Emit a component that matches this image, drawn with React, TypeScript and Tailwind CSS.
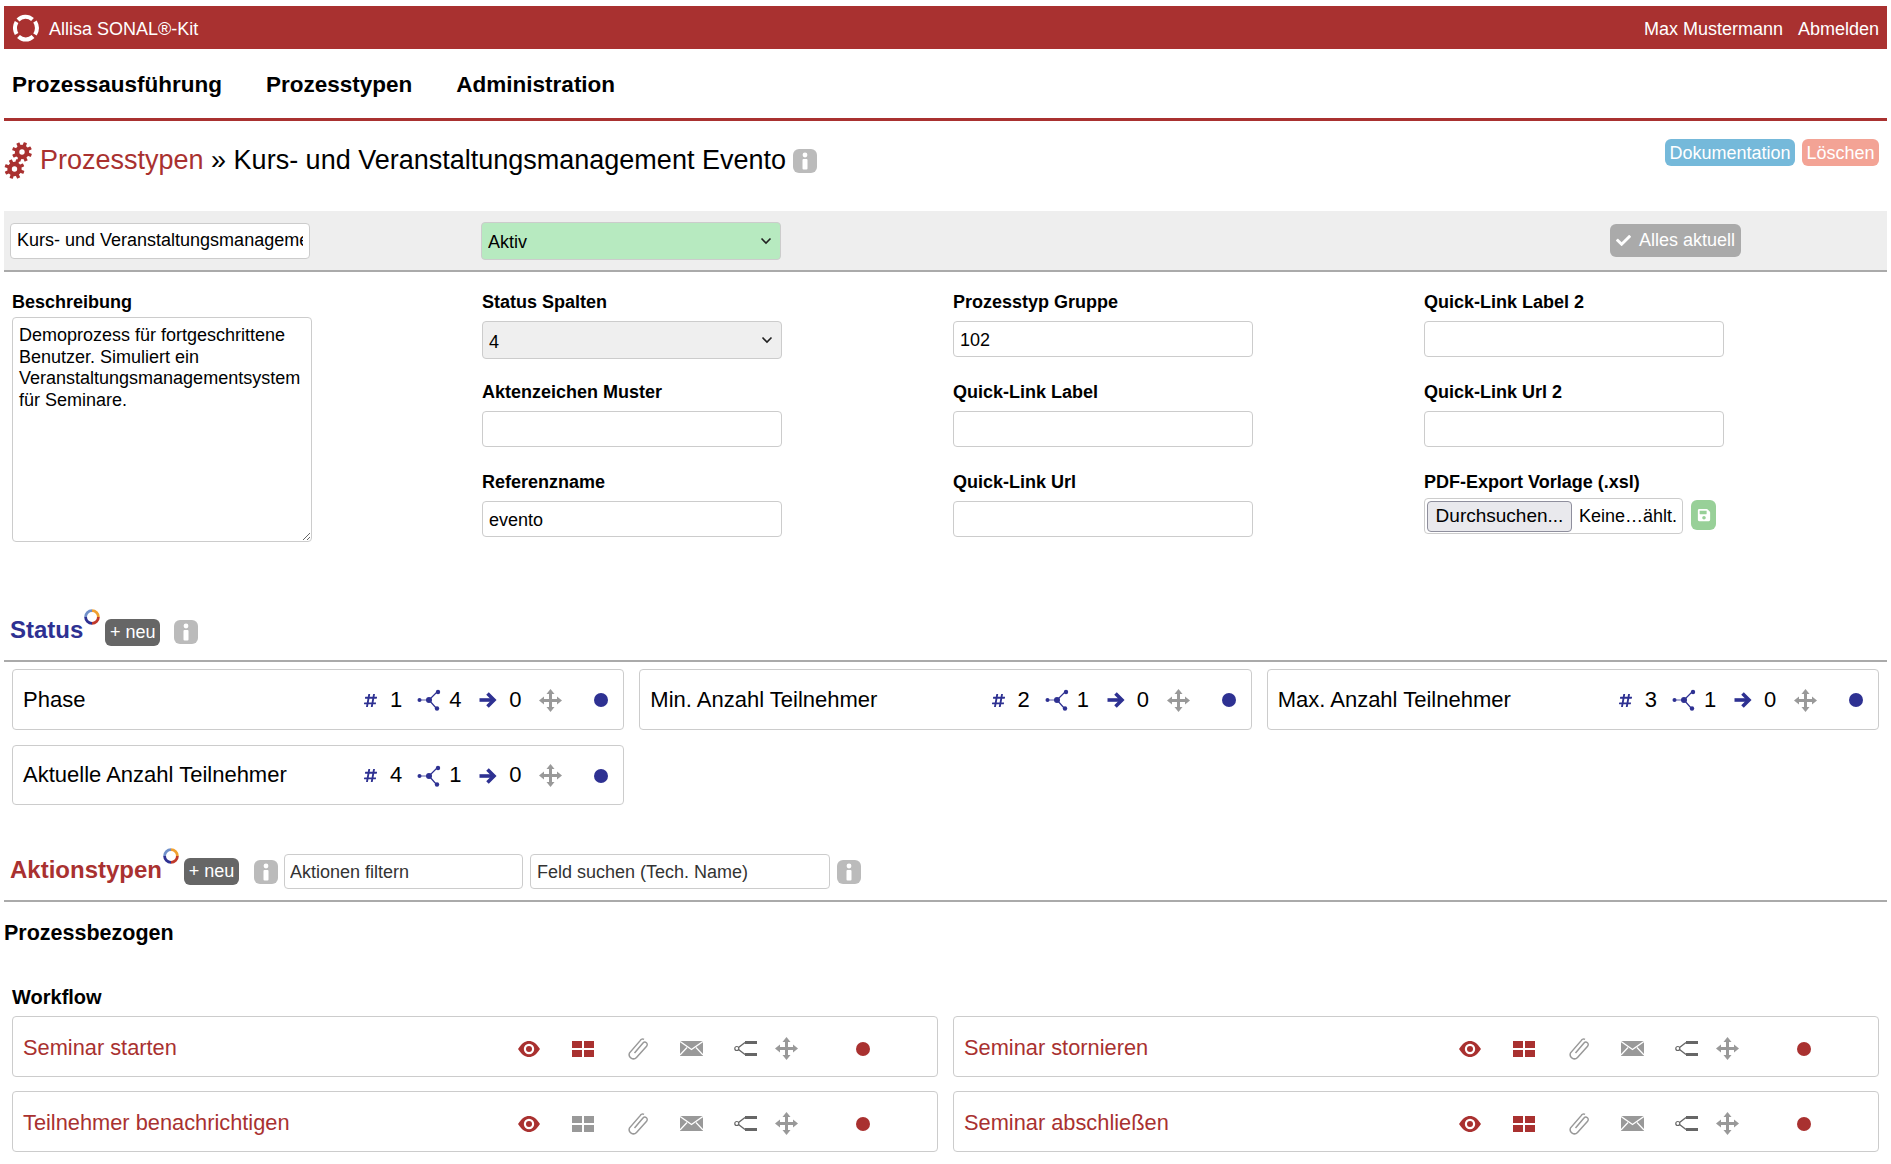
import { FaCheck, FaHashtag, FaSave } from "react-icons/fa"

const RED = "#a93130"
const BLUE = "#2e3192"

const InfoIcon = () => (
  <svg width={24} height={24} viewBox="0 0 24 24" className="shrink-0">
    <rect x="0" y="0" width="24" height="24" rx="6" fill="#bbbbbb" />
    <circle cx="12" cy="6" r="2.4" fill="#fff" />
    <rect x="9.5" y="10" width="5" height="10.5" rx="1" fill="#fff" />
  </svg>
)

const RingLogo = () => (
  <svg width={26} height={28} viewBox="0 0 26 28" className="shrink-0">
    <g fill="none" stroke="#fff" strokeWidth="4">
      <path d="M19.5 5.5 A10.8 11.8 0 0 0 5 6" />
      <path d="M3.6 8 A10.8 11.8 0 0 0 3.6 20" />
      <path d="M5.5 22.5 A10.8 11.8 0 0 0 20 22.5" />
      <path d="M22 20.5 A10.8 11.8 0 0 0 22 7.5" />
    </g>
  </svg>
)

const ColorRing = () => (
  <svg width={16} height={16} viewBox="0 0 16 16" className="shrink-0">
    <g fill="none" strokeWidth="2.8">
      <path d="M8 1.6 A6.4 6.4 0 0 1 14.4 8" stroke="#f0a030" />
      <path d="M14.4 8 A6.4 6.4 0 0 1 8 14.4" stroke="#c0392b" />
      <path d="M8 14.4 A6.4 6.4 0 0 1 1.6 8" stroke={BLUE} />
      <path d="M1.6 8 A6.4 6.4 0 0 1 8 1.6" stroke="#6f8fc9" />
    </g>
  </svg>
)

const Gear = ({ cx, cy }: { cx: number; cy: number }) => (
  <g>
    {[0, 45, 90, 135].map((a) => (
      <rect key={a} x={cx - 1.7} y={cy - 10} width={3.4} height={20} rx="0.5" fill={RED} transform={`rotate(${a + 20} ${cx} ${cy})`} />
    ))}
    <circle cx={cx} cy={cy} r={7.2} fill={RED} />
    <circle cx={cx} cy={cy} r={2.7} fill="#fff" />
  </g>
)

const Gears = () => (
  <svg width={29} height={39} viewBox="0 0 29 39" className="shrink-0">
    <Gear cx={18} cy={11} />
    <Gear cx={10.5} cy={28} />
  </svg>
)

const MoveIcon = ({ className = "" }: { className?: string }) => (
  <svg width={23} height={23} viewBox="0 0 23 23" fill="#999999" className={`shrink-0 ${className}`}>
    <rect x="10" y="4" width="3" height="15" />
    <rect x="4" y="10" width="15" height="3" />
    <path d="M11.5 0 L15.5 5 H7.5 Z" />
    <path d="M11.5 23 L15.5 18 H7.5 Z" />
    <path d="M0 11.5 L5 7.5 V15.5 Z" />
    <path d="M23 11.5 L18 7.5 V15.5 Z" />
  </svg>
)

const ShareIcon = () => (
  <svg width={24} height={24} viewBox="0 0 24 24" className="shrink-0 mt-[2px]">
    <g stroke={BLUE} fill="none">
      <path d="M2 12 H12" strokeWidth="0.8" />
      <path d="M12 12 L20.5 3.5 M12 12 L19.5 20.5" strokeWidth="1.2" />
    </g>
    <g fill={BLUE}>
      <circle cx="2.5" cy="12" r="2" />
      <circle cx="12" cy="12" r="3" />
      <circle cx="21" cy="4" r="2.2" />
      <circle cx="20" cy="20.5" r="2.2" />
    </g>
  </svg>
)

const ArrowIcon = () => (
  <svg width={18} height={18} viewBox="0 0 18 18" fill="none" stroke={BLUE} strokeWidth="3.6" strokeLinejoin="miter" className="shrink-0 mt-[2px]">
    <path d="M0.5 9 H14" />
    <path d="M8.5 2.5 L15 9 L8.5 15.5" />
  </svg>
)

const EyeIcon = () => (
  <svg width={22} height={16} viewBox="0 0 22 16" className="shrink-0">
    <path d="M0 8 C4 2 7 0 11 0 C15 0 18 2 22 8 C18 14 15 16 11 16 C7 16 4 14 0 8 Z" fill={RED} />
    <circle cx="11" cy="8" r="5.2" fill="#fff" />
    <circle cx="11" cy="8" r="3" fill={RED} />
  </svg>
)

const GridIcon = ({ color }: { color: string }) => (
  <svg width={22} height={16} viewBox="0 0 22 16" fill={color} className="shrink-0">
    <rect x="0" y="0" width="10" height="7" />
    <rect x="12" y="0" width="10" height="7" />
    <rect x="0" y="9" width="10" height="7" />
    <rect x="12" y="9" width="10" height="7" />
  </svg>
)

const ClipIcon = () => (
  <svg width={22} height={22} viewBox="0 0 22 22" fill="none" stroke="#999999" strokeWidth="1.5" className="shrink-0">
    <path d="M7.5 15 L16 5 A2.4 2.4 0 0 1 19.6 8.2 L9.5 19.4 A4.2 4.2 0 0 1 2.6 14.8 L13.4 2.4 A2.6 2.6 0 0 1 17 1.4" />
  </svg>
)

const MailIcon = () => (
  <svg width={23} height={15} viewBox="0 0 23 15" className="shrink-0">
    <rect x="0" y="0" width="23" height="15" fill="#999999" />
    <path d="M0 0.5 L11.5 8.5 L23 0.5" fill="none" stroke="#fff" strokeWidth="1.4" />
    <path d="M0 14 L7 6.5 M23 14 L16 6.5" stroke="#fff" strokeWidth="1.2" />
  </svg>
)

const ForkIcon = () => (
  <svg width={23} height={15} viewBox="0 0 23 15" fill="none" className="shrink-0">
    <circle cx="2.8" cy="7.5" r="2" stroke="#666666" strokeWidth="1.2" />
    <path d="M4.5 6.5 L11 1.5 M4.5 8.5 L11 13.5" stroke="#666666" strokeWidth="1.4" />
    <path d="M11 1.5 H23 M11 13.5 H23" stroke="#666666" strokeWidth="3" />
  </svg>
)

const Field = ({ label, children }: { label: string; children: React.ReactNode }) => (
  <div className="h-[90px]">
    <div className="text-[18px] leading-[20px] font-bold text-black mb-[9px] whitespace-nowrap">{label}</div>
    {children}
  </div>
)

const TextBox = ({ value }: { value?: string }) => (
  <input
    type="text"
    defaultValue={value}
    className="block w-[300px] h-[36px] px-[6px] pt-[2px] bg-white border border-[#ccc] rounded-[4px] text-[18px] text-black outline-none"
  />
)

const SelectBox = ({ value, bg }: { value: string; bg: string }) => (
  <div className="relative w-[300px] h-[38px]">
    <select
      defaultValue={value}
      className={`block w-full h-full appearance-none px-[6px] pt-[4px] border border-[#ccc] rounded-[4px] text-[18px] text-black outline-none ${bg}`}
    >
      <option>{value}</option>
    </select>
    <svg width={12} height={8} viewBox="0 0 12 8" fill="none" stroke="#222" strokeWidth="1.6" className="absolute right-[9px] top-[15px]">
      <path d="M1.5 1.5 L6 6 L10.5 1.5" />
    </svg>
  </div>
)

const NewButton = () => (
  <button className="h-[27px] w-[55px] rounded-[6px] bg-[#666] text-white text-[18px] leading-[27px] text-center">+ neu</button>
)

const StatusCard = ({ name, nr, outgoing }: { name: string; nr: number; outgoing: number }) => (
  <div className="flex items-center h-[60.5px] border border-[#ccc] rounded-[4px] pl-[10px] text-[22px] text-black">
    <span className="flex-1 whitespace-nowrap">{name}</span>
    <FaHashtag size={15} color={BLUE} className="shrink-0 mt-[2px]" />
    <span className="w-[24px] text-right mr-[15px]">{nr}</span>
    <ShareIcon />
    <span className="w-[38px] pl-[8px]">{outgoing}</span>
    <ArrowIcon />
    <span className="w-[42px] pl-[12px]">0</span>
    <MoveIcon className="mt-[2px]" />
    <span className="w-[32px]" />
    <span className="w-[14px] h-[14px] mt-[2px] rounded-full bg-[#2e3192] mr-[15px]" />
  </div>
)

const ActionCard = ({ name, gridActive }: { name: string; gridActive?: boolean }) => (
  <div className="flex items-center h-[60.5px] border border-[#ccc] rounded-[4px] pl-[10px] pt-[5px] text-[21.8px] text-[#a93130]">
    <span className="w-[495px] whitespace-nowrap">{name}</span>
    <span className="w-[54px]"><EyeIcon /></span>
    <span className="w-[55px]"><GridIcon color={gridActive ? RED : "#999999"} /></span>
    <span className="w-[53px]"><ClipIcon /></span>
    <span className="w-[54px]"><MailIcon /></span>
    <span className="w-[41px]"><ForkIcon /></span>
    <span className="w-[81px]"><MoveIcon /></span>
    <span className="w-[14px] h-[14px] rounded-full bg-[#a93130]" />
  </div>
)

export default function App() {
  return (
    <div className="h-[1164px] overflow-hidden bg-white pt-[6px] pl-[4px] pr-[4px] font-['Liberation_Sans',Arial,sans-serif] text-black">
      {/* top bar */}
      <div className="flex items-center justify-between h-[43px] pl-[9px] pr-[8px] text-white text-[18px] bg-[#a93130]">
        <div className="flex items-center gap-[10px]">
          <RingLogo />
          <span className="pt-[3px]">Allisa SONAL®-Kit</span>
        </div>
        <div className="flex gap-[15px] pt-[3px]">
          <span>Max Mustermann</span>
          <span>Abmelden</span>
        </div>
      </div>

      <nav className="flex items-center gap-[44px] h-[72px] pl-[8px] pt-[2px] text-[22.5px] font-bold border-b-[3px] border-[#a93130]">
        <span>Prozessausführung</span>
        <span>Prozesstypen</span>
        <span>Administration</span>
      </nav>

      <div className="flex justify-between h-[90px] pr-[8px]">
        <div className="flex items-start pl-[0px] pt-[20px]">
          <Gears />
          <h1 className="ml-[7px] mt-[2px] text-[27px] leading-[34px] font-normal whitespace-nowrap">
            <span className="text-[#a93130]">Prozesstypen</span> » Kurs- und Veranstaltungsmanagement Evento
          </h1>
          <span className="ml-[7px] mt-[8px]"><InfoIcon /></span>
        </div>
        <div className="flex items-start gap-[7px] pt-[18px] text-[18px] text-white">
          <span className="h-[27px] leading-[29px] w-[130px] text-center rounded-[6px] bg-[#75b9da]">Dokumentation</span>
          <span className="h-[27px] leading-[29px] w-[77px] text-center rounded-[6px] bg-[#f3a395]">Löschen</span>
        </div>
      </div>

      {/* save bar */}
      <div className="flex items-center h-[61px] pl-[6px] bg-[#eeeeee] border-b-[2px] border-[#aaaaaa]">
        <input
          type="text"
          defaultValue="Kurs- und Veranstaltungsmanagement Evento"
          className="w-[300px] h-[36px] px-[6px] bg-white border border-[#ccc] rounded-[4px] text-[18px] outline-none"
        />
        <div className="ml-[171px]"><SelectBox value="Aktiv" bg="bg-[#b7eac0]" /></div>
        <button className="flex items-center gap-[8px] ml-[829px] w-[131px] h-[33px] pl-[6px] rounded-[6px] bg-[#aaaaaa] text-white text-[18px]">
          <FaCheck size={15} className="shrink-0" />
          Alles aktuell
        </button>
      </div>

      {/* form */}
      <div className="grid grid-cols-[470px_471px_471px_471px] h-[337px] pt-[20px]">
        <div className="px-[8px]">
          <div className="text-[18px] leading-[20px] font-bold mb-[5px]">Beschreibung</div>
          <textarea
            defaultValue="Demoprozess für fortgeschrittene Benutzer. Simuliert ein Veranstaltungsmanagementsystem für Seminare."
            className="block w-[300px] h-[225px] px-[6px] pt-[7px] bg-white border border-[#ccc] rounded-[4px] text-[18px] leading-[21.7px] outline-none"
          />
        </div>
        <div className="px-[8px]">
          <Field label="Status Spalten"><SelectBox value="4" bg="bg-[#efefef]" /></Field>
          <Field label="Aktenzeichen Muster"><TextBox /></Field>
          <Field label="Referenzname"><TextBox value="evento" /></Field>
        </div>
        <div className="px-[8px]">
          <Field label="Prozesstyp Gruppe"><TextBox value="102" /></Field>
          <Field label="Quick-Link Label"><TextBox /></Field>
          <Field label="Quick-Link Url"><TextBox /></Field>
        </div>
        <div className="px-[8px]">
          <Field label="Quick-Link Label 2"><TextBox /></Field>
          <Field label="Quick-Link Url 2"><TextBox /></Field>
          <Field label="PDF-Export Vorlage (.xsl)">
            <div className="flex items-center -mt-[3px]">
              <div className="flex items-center w-[259px] h-[36px] pl-[2px] bg-white border border-[#ccc] rounded-[4px] text-[18px]">
                <button className="w-[145px] h-[31px] bg-[#e9e9ed] border border-[#8f8f9d] rounded-[4px] text-[19px] whitespace-nowrap">Durchsuchen...</button>
                <span className="ml-[7px] whitespace-nowrap">Keine…ählt.</span>
              </div>
              <span className="flex items-center justify-center ml-[8px] -mt-[2px] w-[25px] h-[30px] rounded-[6px] bg-[#98d098] text-white">
                <FaSave size={14} />
              </span>
            </div>
          </Field>
        </div>
      </div>

      {/* status */}
      <div className="flex items-start h-[53px] pl-[6px] border-b-[2px] border-[#aaaaaa]">
        <span className="mt-[7px] text-[24px] leading-[28px] font-bold text-[#2e3192]">Status</span>
        <span className="ml-[1px]"><ColorRing /></span>
        <span className="ml-[5px] mt-[10px]"><NewButton /></span>
        <span className="ml-[14px] mt-[11px]"><InfoIcon /></span>
      </div>
      <div className="grid grid-cols-3 gap-[15px] mt-[7px] px-[8px]">
        <StatusCard name="Phase" nr={1} outgoing={4} />
        <StatusCard name="Min. Anzahl Teilnehmer" nr={2} outgoing={1} />
        <StatusCard name="Max. Anzahl Teilnehmer" nr={3} outgoing={1} />
        <StatusCard name="Aktuelle Anzahl Teilnehmer" nr={4} outgoing={1} />
      </div>

      {/* aktionstypen */}
      <div className="flex items-start h-[54px] mt-[43px] pl-[6px] border-b-[2px] border-[#aaaaaa]">
        <span className="mt-[8px] text-[24px] leading-[28px] font-bold text-[#a93130]">Aktionstypen</span>
        <span className="ml-[1px]"><ColorRing /></span>
        <span className="ml-[5px] mt-[10px]"><NewButton /></span>
        <span className="ml-[15px] mt-[12px]"><InfoIcon /></span>
        <input
          placeholder="Aktionen filtern"
          className="ml-[6px] mt-[6px] w-[239px] h-[35px] pl-[5px] pr-[6px] pt-[2px] border border-[#ccc] rounded-[4px] text-[18px] outline-none placeholder:text-[#333]"
        />
        <input
          placeholder="Feld suchen (Tech. Name)"
          className="ml-[7px] mt-[6px] w-[300px] h-[35px] pl-[6px] pr-[6px] pt-[2px] border border-[#ccc] rounded-[4px] text-[18px] outline-none placeholder:text-[#333]"
        />
        <span className="ml-[7px] mt-[12px]"><InfoIcon /></span>
      </div>

      <h2 className="mt-[18px] text-[21.5px] leading-[26px] font-bold">Prozessbezogen</h2>
      <div className="px-[8px]">
        <h3 className="mt-[41px] mb-[9px] text-[20px] leading-[20px] font-bold">Workflow</h3>
        <div className="grid grid-cols-2 gap-x-[15px] gap-y-[14.5px]">
          <ActionCard name="Seminar starten" gridActive />
          <ActionCard name="Seminar stornieren" gridActive />
          <ActionCard name="Teilnehmer benachrichtigen" />
          <ActionCard name="Seminar abschließen" gridActive />
        </div>
      </div>
    </div>
  )
}
